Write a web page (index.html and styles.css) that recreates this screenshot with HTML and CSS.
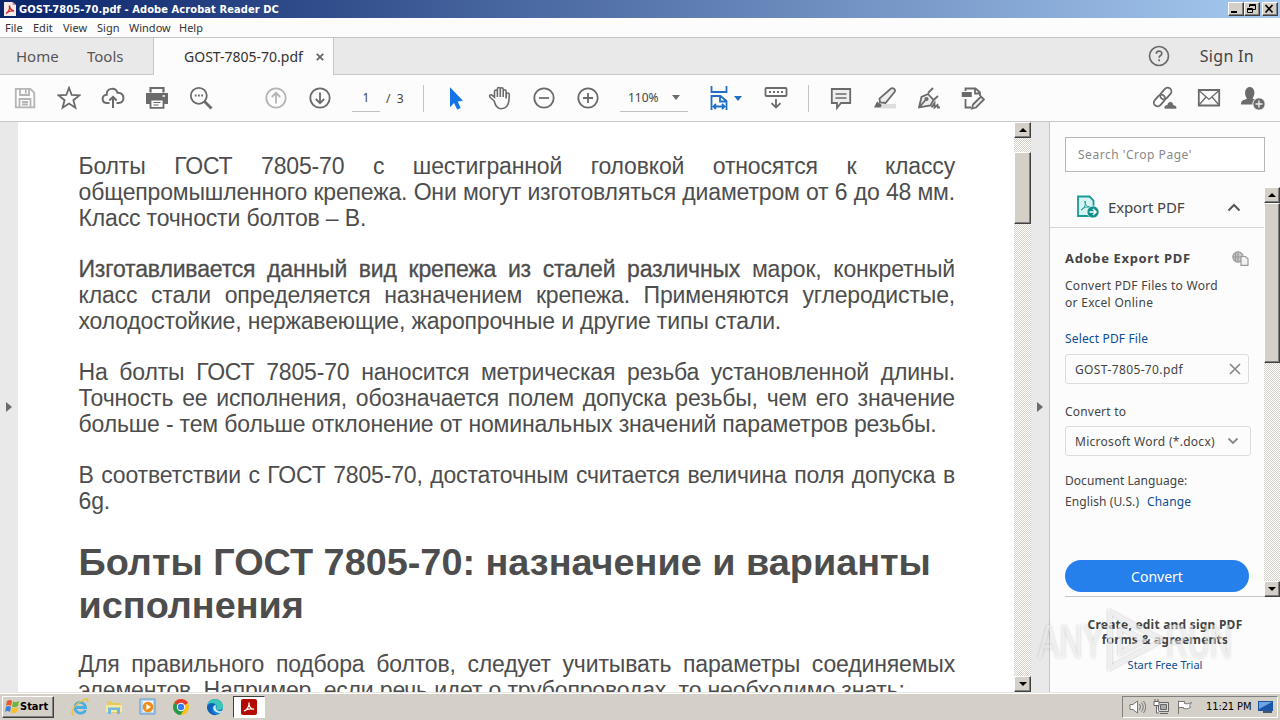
FILE: index.html
```html
<!DOCTYPE html>
<html lang="en">
<head>
<meta charset="UTF-8" />
<meta name="viewport" content="width=device-width, initial-scale=1" />
<title>GOST-7805-70.pdf - Adobe Acrobat Reader DC</title>
<link rel="stylesheet" href="styles.css">
</head>
<body>

<div class="titlebar">
  <svg class="app-icon" width="12" height="14" viewBox="0 0 12 14"><path d="M0 0h8.500l3.500 3v11H0z" fill="#f6e9e9"/><path d="M8.500 0v3H12z" fill="#c88"/><path d="M2 11.500C5 9.500 6 6.500 5.300 3.500c.7 3.500 2 5 4.700 5.500-3-.5-5.500 0-8 2.500z" fill="none" stroke="#d02a20" stroke-width="1.300"/></svg>
  <span class="title">GOST-7805-70.pdf - Adobe Acrobat Reader DC</span>
  <div class="win-buttons">
    <button class="raised"><svg width="12" height="10"><path d="M2 7h6v2H2z"/></svg></button>
    <button class="raised"><svg width="12" height="10" fill="none" stroke="#000"><path d="M4.500 3V.500h6v5H8M4.500 1.500h6M2.500 4.500h5v4h-5zM2.500 5.500h5"/></svg></button>
    <button class="raised close"><svg width="12" height="10" fill="none" stroke="#000" stroke-width="1.700"><path d="M2.500 1l7 7.500M9.500 1l-7 7.500"/></svg></button>
  </div>
</div>

<div class="menubar">
  <span class="m-file">File</span><span class="m-edit">Edit</span><span class="m-view">View</span><span class="m-sign">Sign</span><span class="m-window">Window</span><span>Help</span>
</div>

<div class="tabbar">
  <div class="nav-tabs"><span class="home">Home</span><span class="tools">Tools</span></div>
  <div class="doc-tab"><span>GOST-7805-70.pdf</span><svg width="8" height="8" stroke="#666" stroke-width="1.800"><path d="M.8.800l6.400 6.400M7.200.8.800 7.200"/></svg></div>
  <div class="account">
    <svg width="22" height="22" viewBox="0 0 22 22" fill="none" stroke="#6b6b6b" stroke-width="1.700"><circle cx="11" cy="11" r="9.500"/><path d="M8.300 8.800c0-3.600 5.500-3.500 5.500-.4 0 2.100-2.700 2.100-2.700 4.400M11.100 14.300v2"/></svg>
    <span class="sign-in">Sign In</span>
  </div>
</div>

<div class="toolbar">
  <div class="group file-tools">
    <svg class="faded" viewBox="0 0 24 24"><path d="M2.800 2.800h14.500l4 4v14.500H2.800zM7 3v6h9V3M12.800 4v3.500M6.500 21v-8h11v8M9 16h6M9 18.500h6"/></svg>
    <svg viewBox="0 0 24 24"><path d="M12 1.800l2.700 7.200 7.700.4-6 4.800 2 7.500-6.400-4.200-6.400 4.200 2-7.500-6-4.800 7.700-.4z"/></svg>
    <svg viewBox="0 0 24 24"><path d="M8.500 17H6.200c-6 0-6-8-.5-8.200C5.300 2 14.500.500 16.500 6.800 24 6 24.500 17 17.500 17h-2M12 22V11M8.300 14.500L12 10.800l3.700 3.700" stroke-width="2"/></svg>
    <svg viewBox="0 0 24 24"><path d="M1 7h22v11H1z" fill="#6b6b6b" stroke="none"/><path d="M5.500 6.500V2h13v4.500" stroke-width="2.200"/><path d="M5.500 13.500h13v8.300h-13z" fill="#fcfcfc"/><path d="M8.500 16.500h7M8.500 19h5" stroke-width="1.200"/><path d="M17.500 10h2.500" stroke="#fff" stroke-width="1.500"/></svg>
    <svg viewBox="0 0 24 24"><circle cx="9.800" cy="9.800" r="8"/><path d="M15.500 15.500l7 7" stroke-width="2.800"/><path d="M5.800 9.500h1.800M9 9.500h1.800M12.200 9.500H14" stroke-width="1.800"/></svg>
  </div>
  <div class="group page-nav">
    <svg class="faded" viewBox="0 0 24 24"><circle cx="12" cy="12" r="9.700"/><path d="M12 17.500V7M7.800 11L12 6.800l4.200 4.200"/></svg>
    <svg viewBox="0 0 24 24"><circle cx="12" cy="12" r="9.700"/><path d="M12 6.500V17M7.800 13l4.200 4.200 4.200-4.200"/></svg>
  </div>
  <span class="page-num">1</span>
  <span class="page-total">/&nbsp; 3</span>
  <div class="sep sep-one"></div>
  <div class="group view-tools">
    <svg viewBox="0 0 24 24"><path d="M6 1.300v20l4-4.300 3.200 6.500 3.500-1.500-3-6.500 5.300-.7z" fill="#1473e6" stroke="none"/></svg>
    <svg viewBox="0 0 24 24"><path d="M6.200 15L2.300 11.500c-1.800-2 .4-3.500 2-2.200L6.500 11.200V5.500c0-2 2.900-2 2.900 0v5.500V3c0-2 2.900-2 2.900 0v8V3.200c0-2 2.900-2 2.900 0V11V5.200c0-1.900 2.900-1.800 2.900 0v7.300l.3-4.300c.2-1.900 3-1.600 2.900.5L21 14c-.4 5-3 8.700-8 8.700-4.500 0-5.800-3.400-6.800-7.700z" stroke-width="1.600"/></svg>
    <svg viewBox="0 0 24 24"><circle cx="12" cy="12" r="9.700"/><path d="M7 12h10"/></svg>
    <svg viewBox="0 0 24 24"><circle cx="12" cy="12" r="9.700"/><path d="M7 12h10M12 7v10"/></svg>
  </div>
  <span class="zoom-level">110%<i class="caret"></i></span>
  <svg class="fit" viewBox="0 0 24 26"><path d="M4.500 1v6h15V1M4.500 25V11h9l6 5v9M13 11v5.500h6M7 21.500h10M9 19l-2.500 2.500L9 24M15 19l2.500 2.500L15 24" stroke="#2070c8"/></svg>
  <i class="caret blue"></i>
  <svg class="read" viewBox="0 0 24 24"><rect x="1.500" y="2" width="21" height="8" rx="1"/><path d="M5 6h2M9 6h2M13 6h2M17 6h2M12 13v8.500M7.500 17.200l4.500 4.300 4.500-4.300"/></svg>
  <div class="sep"></div>
  <div class="group comment-tools">
    <svg viewBox="0 0 24 24"><path d="M2.800 3h18.400v14H12l-4 5v-5H2.800z" fill="#eee"/><path d="M6.500 8h11M6.500 12h11" stroke-width="1.400"/></svg>
    <svg viewBox="0 0 24 24"><path d="M10 18h13v4.500H7z" fill="#ddd" stroke="none"/><path d="M18 2.500c1.700-1.200 5 1 3.700 3.200L12.500 17 7 16.500 6.500 12.500z" fill="#eee"/><path d="M4 15.500l5 3.500-1.500 2.500H1z" fill="#6b6b6b" stroke="none"/></svg>
    <svg viewBox="0 0 24 24"><path d="M11 8l5.500 6-3 5.500L2 21.500 4.500 11zM11 7l5-5M16.500 14l4.500-4M2.500 21l6-7" fill="#eee"/><circle cx="9.500" cy="13" r="1.200"/><path d="M14.500 21.500l3-4.500v4.500l3-2.500.5 2.500h2"/></svg>
    <svg viewBox="0 0 24 24"><path d="M.800 6h10v5h-10z" fill="#6b6b6b" stroke="none"/><path d="M4.500 5V2.500h10l4.500 4V10M14 3v4.500h5M4.500 13v8.500H10"/><path d="M12 18.500l8-8 3 3-8 8-4 1z" fill="#eee"/></svg>
  </div>
  <div class="group share-tools">
    <svg viewBox="0 0 24 24"><g transform="rotate(-48 10 11)"><rect x="-1.500" y="7" width="13" height="7.500" rx="3.700"/><rect x="8" y="7" width="13" height="7.500" rx="3.700"/></g><path d="M11.500 23c-1.200-3 1-4.500 2.500-4 1-4.500 6-4.500 6.500 0 3.500 0 4 4 2 4z" fill="#6b6b6b" stroke="#fcfcfc" stroke-width=".6"/></svg>
    <svg viewBox="0 0 24 24"><path d="M1.800 4h20.400v15.500H1.800z"/><path d="M2 4.500l10 9 10-9M2 19l7-8M22 19l-7-8" stroke-width="1.300"/></svg>
    <svg viewBox="0 0 24 24"><path d="M0 18.500c0-4.500 2.500-4 6-6C2.500 8 4 1 8.800 1S15 8 11.500 12.500c1.500 1 3 1 4 1.500l-3 4.500z" fill="#6b6b6b" stroke="none"/><circle cx="18" cy="18" r="6.200" fill="#6b6b6b" stroke="#fcfcfc" stroke-width="1"/><path d="M14.500 18h7M18 14.500v7" stroke="#eee" stroke-width="1.400"/></svg>
  </div>
</div>

<div class="workspace">
  <div class="gutter left"><i class="tri"></i></div>
  <div class="page">
    <p>Болты ГОСТ 7805-70 с шестигранной головкой относятся к классу общепромышленного крепежа. Они могут изготовляться диаметром от 6 до 48 мм. Класс точности болтов – В.</p>
    <p><span class="strong">Изготавливается данный вид крепежа из сталей различных</span> марок, конкретный класс стали определяется назначением крепежа. Применяются углеродистые, холодостойкие, нержавеющие, жаропрочные и другие типы стали.</p>
    <p>На болты ГОСТ 7805-70 наносится метрическая резьба установленной длины. Точность ее исполнения, обозначается полем допуска резьбы, чем его значение больше - тем больше отклонение от номинальных значений параметров резьбы.</p>
    <p>В соответствии с ГОСТ 7805-70, достаточным считается величина поля допуска в 6g.</p>
    <h1>Болты ГОСТ 7805-70: назначение и варианты исполнения</h1>
    <p>Для правильного подбора болтов, следует учитывать параметры соединяемых элементов. Например, если речь идет о трубопроводах, то необходимо знать:</p>
  </div>
  <div class="scrollbar doc-scroll">
    <div class="raised arrow"><i class="up"></i></div>
    <div class="raised thumb"></div>
    <div class="raised arrow down-btn"><i class="down"></i></div>
  </div>
  <div class="gutter right"><i class="tri"></i></div>

  <div class="panel">
    <div class="search">Search 'Crop Page'</div>
    <div class="panel-body">
      <div class="tool">
        <div class="tool-head">
          <svg width="24" height="24" viewBox="0 0 24 24"><path d="M2 1.500h11.500l4 4V21H2z" fill="#d8f4f2" stroke="#1a9a94" stroke-width="1.800"/><path d="M5 15c4-2 5-6 4-9 0 4 2 6 5 6-3 0-6 0-9 3z" fill="none" stroke="#1a9a94"/><circle cx="17" cy="17" r="6" fill="#12908b" stroke="#fff" stroke-width=".6"/><path d="M13.500 17h6M17 14l3 3-3 3" fill="none" stroke="#fff" stroke-width="1.500"/></svg>
          <span>Export PDF</span>
          <svg class="chev" width="14" height="9" fill="none" stroke="#555" stroke-width="2"><path d="M1.500 7.500L7 2l5.500 5.500"/></svg>
        </div>
        <div class="tool-body">
          <div class="heading"><b>Adobe Export PDF</b>
            <svg width="17" height="15" viewBox="0 0 17 15" fill="none" stroke="#9a9a9a" stroke-width="1.200"><circle cx="6" cy="6" r="5.200" fill="#c8c8c8"/><path d="M1 6h10M6 1v10M3.500 2v8"/><path d="M9 5.500h4.500l2.500 2.300v6.500H9z" fill="#f2f2f2"/></svg>
          </div>
          <div class="desc">Convert PDF Files to Word<br>or Excel Online</div>
          <div class="link select">Select PDF File</div>
          <div class="field file-field"><span>GOST-7805-70.pdf</span><svg width="12" height="12" stroke="#888" stroke-width="1.700"><path d="M1 1l10 10M11 1L1 11"/></svg></div>
          <div class="label">Convert to</div>
          <div class="field format"><span>Microsoft Word (*.docx)</span><svg width="12" height="8" fill="none" stroke="#888" stroke-width="1.800"><path d="M1.500 1.500L6 6l4.500-4.500"/></svg></div>
          <div class="lang">Document Language:</div>
          <div class="lang-value"><span>English (U.S.)</span><span class="link">Change</span></div>
          <button class="convert">Convert</button>
        </div>
      </div>
      <div class="scrollbar panel-scroll">
        <div class="raised arrow"><i class="up"></i></div>
        <div class="raised thumb"></div>
        <div class="raised arrow down-btn"><i class="down"></i></div>
      </div>
    </div>
    <div class="promo">
      <b>Create, edit and sign PDF<br>forms &amp; agreements</b>
      <span class="link">Start Free Trial</span>
    </div>
    <svg class="watermark" width="200" height="68" viewBox="0 0 200 68">
      <text x="2" y="52" textLength="66" lengthAdjust="spacingAndGlyphs">ANY</text>
      <path d="M74 6v56l52-28zM84 22v25l24-12.500z"/>
      <text x="130" y="52" textLength="66" lengthAdjust="spacingAndGlyphs">RUN</text>
    </svg>
  </div>
</div>

<div class="taskbar">
  <button class="raised start"><svg width="15" height="15" viewBox="0 0 15 15"><path d="M2 2q3-2 5 0L6 7Q3 5 1 7z" fill="#e8582a"/><path d="M8 2.500q3 1.500 6-.5l-1 5q-3 2-6 .5z" fill="#6fb53c"/><path d="M1 8q2-2 5 0l-1 5q-3-2-5 0z" fill="#3c80d8"/><path d="M7 8.500q3 1.500 6-.5l-1 5q-3 2-6 .5z" fill="#f5c02c"/></svg>Start</button>
  <div class="quick">
    <svg width="18" height="18" viewBox="0 0 18 18" fill="none"><path d="M14.500 12c-2 5-10.500 4-10.500-2.500s9.500-7 10.500 0H5" stroke="#48aee4" stroke-width="2.800"/><path d="M3 16.500C-1 17 1 9 9 4s9-3 7 0" stroke="#f0c030" stroke-width="1.400"/></svg>
    <svg width="18" height="18" viewBox="0 0 18 18"><path d="M2 3h5l1 2h8v10H2z" fill="#e8c860"/><path d="M1 7h16v7H1z" fill="#f8e9a0"/><path d="M3 16V9.500h12V16h-3v-4H6v4z" fill="#70b9df"/></svg>
    <svg width="18" height="18" viewBox="0 0 18 18"><path d="M1 1h15v15H1z" fill="#b9d6ee" stroke="#5899cf"/><path d="M4 3h10v11H4z" fill="#eef6fc"/><circle cx="9" cy="9" r="5.300" fill="#f28a16"/><path d="M7.300 6v6l4.700-3z" fill="#fff"/></svg>
    <svg width="18" height="18" viewBox="0 0 18 18"><circle cx="9" cy="9" r="8" fill="#fbc116"/><path d="M9 9L2.100 5A8 8 0 0 1 15.900 5z" fill="#e33b2e"/><path d="M9 9L2.100 5A8 8 0 0 0 8.500 17l4-6z" fill="#269a4a"/><path d="M4 4.500h12L9 9z" fill="#e33b2e"/><circle cx="9" cy="9" r="4.200" fill="#fff"/><circle cx="9" cy="9" r="3.200" fill="#3b7de8"/></svg>
    <svg width="18" height="18" viewBox="0 0 18 18"><circle cx="9" cy="9" r="8" fill="#1682d4"/><path d="M1.500 7C3-.5 15-1 17 8c.5 4-5 5-7 3 2-3 0-6-4-6-2 0-3.500.7-4.500 2z" fill="#3cc9b4"/><path d="M10 7c-4 0-4 7 3 8 1.500 0 3-.8 3.500-2-5 1.500-8-2-6.500-6z" fill="#d4eef5"/><path d="M1 9c2-5 7-4 8-2-5 1-4 8 2 10-6 1-10-4-10-8z" fill="#1260b8"/></svg>
    <div class="active-app"><svg width="16" height="16" viewBox="0 0 16 16"><rect width="16" height="16" rx="2" fill="#b30b00"/><path d="M3 12c3-1 5.500-5 5-8.500C7.500 7 10 10.500 13 10.200 10 9.500 6 9.800 3 12z" fill="none" stroke="#fff" stroke-width="1.200"/></svg></div>
  </div>
  <div class="tray">
    <svg width="17" height="16" viewBox="0 0 17 16" fill="#fff" stroke="#777"><path d="M1 5.500h3L8.500 2v12L4 10.500H1z"/><path d="M10.500 5q2 3 0 6M12.500 3.500q3.500 4.500 0 9M14.500 2q4.500 6 0 12" fill="none"/></svg>
    <svg width="16" height="16" viewBox="0 0 16 16" fill="#ddd" stroke="#666"><path d="M5.500 3.500h10v9h-10zM7 14.500h8"/><path d="M7.500 5.500h6v5h-6z" fill="#aaa"/><path d="M1 2.500h5v4H1zM2 0v2M5 0v2M3.500 6v8H6" fill="#fff"/></svg>
    <svg width="17" height="16" viewBox="0 0 17 16" fill="#fff" stroke="#777"><path d="M2.500 15V1.500M2.500 2.500h6v2c2 .5 4 .5 7-1l-2 3 1 2c-3 1.500-5 1.500-7 1v-1h-5z"/></svg>
    <span class="clock">11:21 PM</span>
    <svg width="16" height="14" viewBox="0 0 16 14"><path d="M0 1h15v10H0z" fill="#1c55a8"/><path d="M1 2h13L1 9z" fill="#6aa6e4"/><path d="M5 11h9v2H5z" fill="#456"/></svg>
  </div>
</div>

</body>
</html>
```
FILE: styles.css
```css
* {
  box-sizing: border-box;
}
body {
  margin: 0;
  width: 1280px;
  height: 720px;
  overflow: hidden;
  display: flex;
  flex-direction: column;
  background: #fcfcfc;
  color: #444;
  font-family: "Noto Sans", "Open Sans", sans-serif;
  font-size: 12px;
  white-space: nowrap;
}
button {
  font: inherit;
  padding: 0;
}
svg {
  flex: none;
  display: block;
}

/* classic 3d edges */
.raised {
  background: #d4d0c8;
  border: 1px solid;
  border-color: #fff #404040 #404040 #fff;
  box-shadow: inset -1px -1px 0 #808080;
}

.titlebar {
  height: 18px;
  flex: none;
  display: flex;
  align-items: center;
  padding: 0 2px 0 4px;
  background: linear-gradient(to right, #0a246a, #a6caf0);
}
.title {
  margin-left: 3px;
  color: #fff;
  font: bold 11px "DejaVu Sans Condensed", "DejaVu Sans", sans-serif;
  letter-spacing: 0.09px;
}
.win-buttons {
  margin-left: auto;
  display: flex;
}
.win-buttons button {
  width: 16px;
  height: 14px;
}
.win-buttons .close {
  margin-left: 2px;
}

.menubar {
  height: 19px;
  flex: none;
  display: flex;
  align-items: center;
  padding-left: 5px;
  font-size: 11px;
  color: #333;
}
.m-file { width: 28px; }
.m-edit { width: 30px; }
.m-view { width: 34px; }
.m-sign { width: 32px; }
.m-window { width: 50px; }

.tabbar {
  height: 38px;
  flex: none;
  display: flex;
  border-top: 1px solid #c4c4c4;
  font-size: 15px;
}
.nav-tabs {
  width: 154px;
  background: #e9e9e9;
  border-right: 1px solid #c8c8c8;
  border-bottom: 1px solid #c8c8c8;
  display: flex;
  align-items: center;
  padding-left: 16px;
  color: #555;
}
.home { width: 71px; }
.doc-tab {
  width: 179px;
  display: flex;
  align-items: center;
  justify-content: space-between;
  padding: 0 9px 0 30px;
  font-size: 14px;
  color: #333;
}
.account {
  flex: 1;
  background: #e9e9e9;
  border-left: 1px solid #c8c8c8;
  border-bottom: 1px solid #c8c8c8;
  display: flex;
  align-items: center;
  justify-content: flex-end;
  gap: 30px;
  padding-right: 26px;
}
.sign-in {
  font-size: 16px;
  letter-spacing: 0.3px;
}

.toolbar {
  height: 47px;
  flex: none;
  display: flex;
  align-items: center;
  border-bottom: 1px solid #c8c8c8;
}
.toolbar svg {
  width: 24px;
  height: 24px;
  fill: none;
  stroke: #6b6b6b;
  stroke-width: 1.8;
}
.toolbar svg.faded {
  stroke: #b4b4b4;
}
.group {
  display: flex;
  gap: 20px;
}
.file-tools { margin-left: 13px; }
.page-nav { margin-left: 51px; }
.page-num {
  width: 28px;
  height: 28px;
  margin-left: 20px;
  line-height: 28px;
  text-align: center;
  border-bottom: 1px solid #c0c0c0;
}
.page-total {
  margin-left: 6px;
  width: 37px;
}
.sep {
  width: 1px;
  height: 27px;
  background: #c4c4c4;
}
.view-tools { margin-left: 20px; }
.zoom-level {
  width: 68px;
  height: 28px;
  margin-left: 20px;
  padding: 0 8px;
  display: flex;
  align-items: center;
  justify-content: space-between;
  border-bottom: 1px solid #c0c0c0;
}
.caret {
  border: 4px solid transparent;
  border-top: 5px solid #6b6b6b;
  border-bottom: 0;
}
.toolbar .fit {
  height: 26px;
  margin-left: 19px;
}
.caret.blue {
  border-top-color: #2070c8;
  margin-left: 3px;
}
.read { margin: 0 20px 0 22px; }
.comment-tools { margin-left: 20px; }
.share-tools { margin-left: auto; margin-right: 15px; }

.workspace {
  flex: 1;
  min-height: 0;
  display: flex;
}
.gutter {
  width: 18px;
  flex: none;
  background: #e9e9e9;
  display: flex;
  align-items: center;
  justify-content: center;
}
.gutter.right {
  width: 19px;
  border-right: 1px solid #c4c4c4;
}
.tri {
  border: 5px solid transparent;
  border-left: 6px solid #6b6b6b;
  border-right: 0;
}
.page {
  width: 996px;
  flex: none;
  overflow: hidden;
  background: #fff;
  padding: 31px 59px 0 60.5px;
  color: #4d4d4d;
  font-family: "Liberation Sans", Arial, sans-serif;
  font-size: 23px;
  line-height: 26px;
  letter-spacing: -0.16px;
  white-space: normal;
}
.page p {
  margin: 0 0 25px;
  text-align: justify;
}
.page .strong {
  -webkit-text-stroke: 0.3px #4d4d4d;
}
.page h1 {
  margin: 0 0 24px;
  padding-top: 2px;
  font-size: 37.85px;
  line-height: 43px;
  letter-spacing: 0;
}

.scrollbar {
  width: 17px;
  flex: none;
  display: flex;
  flex-direction: column;
  background: repeating-conic-gradient(#d4d0c8 0 25%, #fff 0 50%) 0 0 / 2px 2px;
}
.arrow {
  height: 16px;
  flex: none;
  display: flex;
  align-items: center;
  justify-content: center;
}
.up {
  border: 4px solid transparent;
  border-bottom-color: #000;
  border-top: 0;
}
.down {
  border: 4px solid transparent;
  border-top-color: #000;
  border-bottom: 0;
}
.down-btn { margin-top: auto; }
.doc-scroll .thumb {
  margin-top: 14px;
  height: 72px;
}

.panel {
  flex: 1;
  display: flex;
  flex-direction: column;
  position: relative;
}
.search {
  width: 200px;
  height: 35px;
  flex: none;
  margin: 15px 0 0 15px;
  padding-left: 12px;
  line-height: 34px;
  border: 1px solid #b8b8b8;
  background: #fff;
  color: #888;
  letter-spacing: 0.52px;
}
.panel-body {
  margin-top: 15px;
  height: 410px;
  flex: none;
  display: flex;
}
.tool {
  width: 214px;
}
.tool-head {
  height: 41px;
  display: flex;
  align-items: center;
  border-bottom: 1px solid #d4d4d4;
  padding-left: 26px;
  font-size: 15px;
}
.tool-head span {
  width: 119px;
  margin-left: 8px;
  letter-spacing: -0.15px;
}
.tool-body {
  margin-left: 15px;
  height: 369px;
  border-bottom: 1px solid #c4c4c4;
}
.heading {
  display: flex;
  justify-content: space-between;
  align-items: center;
  padding: 20px 15px 0 0;
  height: 40px;
  font-size: 13px;
  letter-spacing: 0.65px;
}
.desc {
  margin-top: 9px;
  line-height: 17px;
  letter-spacing: 0.28px;
}
.link {
  color: #0d4f92;
}
.select {
  margin-top: 19px;
  line-height: 17px;
  letter-spacing: 0.15px;
}
.field {
  width: 184px;
  height: 30px;
  border: 1px solid #dcdcdc;
  border-radius: 3px;
  display: flex;
  align-items: center;
  justify-content: space-between;
  padding: 0 7px 0 9px;
  letter-spacing: 0.38px;
}
.file-field { margin-top: 7px; }
.label {
  margin-top: 19px;
  line-height: 17px;
  letter-spacing: 0.2px;
}
.format {
  width: 186px;
  margin-top: 6px;
  padding-right: 11px;
  letter-spacing: 0.28px;
}
.lang {
  margin-top: 16px;
  line-height: 17px;
  letter-spacing: 0.05px;
}
.lang-value {
  margin-top: 4px;
  line-height: 17px;
  display: flex;
  gap: 8px;
  letter-spacing: 0.1px;
}
.convert {
  display: block;
  width: 184px;
  height: 32px;
  margin-top: 50px;
  border: 0;
  border-radius: 16px;
  background: #2680eb;
  color: #fff;
  font-size: 14px;
}
.panel-scroll {
  width: 16px;
}
.panel-scroll .thumb {
  height: 160px;
}
.promo {
  margin-top: 20px;
  text-align: center;
  line-height: 15px;
  letter-spacing: 0.22px;
}
.promo b,
.promo .link {
  display: block;
}
.promo .link {
  margin-top: 10px;
  font-size: 11px;
  letter-spacing: 0;
}
.watermark {
  position: absolute;
  left: -14px;
  top: 484px;
  overflow: visible;
  font: 48px "Liberation Sans", Arial, sans-serif;
  fill: rgba(255, 255, 255, 0.5);
  filter: drop-shadow(0 0 1.5px rgba(0, 0, 0, 0.35));
}
.watermark path {
  fill: none;
  stroke: rgba(255, 255, 255, 0.65);
  stroke-width: 4;
}

.taskbar {
  height: 28px;
  flex: none;
  display: flex;
  align-items: center;
  background: #d4d0c8;
  border-top: 1px solid #e8e6e0;
  box-shadow: inset 0 1px 0 #fff;
  padding: 0 2px;
}
.start {
  width: 52px;
  height: 22px;
  display: flex;
  align-items: center;
  padding-left: 2px;
  color: #000;
  font: bold 11px "DejaVu Sans Condensed", "DejaVu Sans", sans-serif;
}
.quick {
  display: flex;
  align-items: center;
  gap: 15.8px;
  margin-left: 17px;
}
.active-app {
  width: 32px;
  height: 22px;
  margin-left: -7px;
  background: #fff;
  border: 1px solid;
  border-color: #404040 #fff #fff #404040;
  display: flex;
  align-items: center;
  justify-content: center;
}
.tray {
  width: 156px;
  height: 22px;
  margin-left: auto;
  padding: 0 1px 0 6px;
  border: 1px solid;
  border-color: #808080 #fff #fff #808080;
  display: flex;
  align-items: center;
  gap: 7px;
}
.clock {
  color: #000;
  font: 11px "DejaVu Sans Condensed", "DejaVu Sans", sans-serif;
  margin-left: 6px;
  letter-spacing: -0.1px;
}
```
